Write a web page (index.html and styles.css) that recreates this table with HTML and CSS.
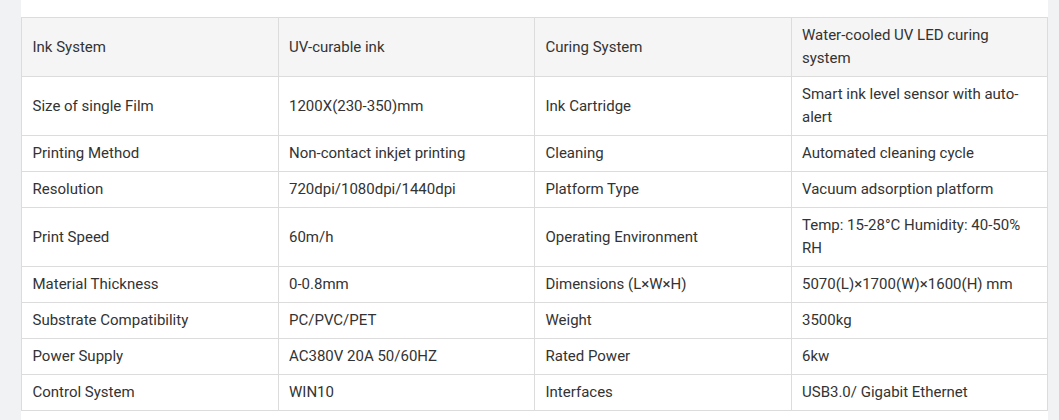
FILE: index.html
```html
<!DOCTYPE html>
<html>
<head>
<meta charset="utf-8">
<link rel="stylesheet" href="styles.css">
</head>
<body>
<div class="panel">
<table class="spec">
<tr class="head"><td>Ink System</td><td>UV-curable ink</td><td>Curing System</td><td>Water-cooled UV LED curing system</td></tr>
<tr><td>Size of single Film</td><td>1200X(230-350)mm</td><td>Ink Cartridge</td><td>Smart ink level sensor with auto-alert</td></tr>
<tr><td>Printing Method</td><td>Non-contact inkjet printing</td><td>Cleaning</td><td>Automated cleaning cycle</td></tr>
<tr><td>Resolution</td><td>720dpi/1080dpi/1440dpi</td><td>Platform Type</td><td>Vacuum adsorption platform</td></tr>
<tr><td>Print Speed</td><td>60m/h</td><td>Operating Environment</td><td>Temp: 15-28°C Humidity: 40-50% RH</td></tr>
<tr><td>Material Thickness</td><td>0-0.8mm</td><td>Dimensions (L×W×H)</td><td>5070(L)×1700(W)×1600(H) mm</td></tr>
<tr><td>Substrate Compatibility</td><td>PC/PVC/PET</td><td>Weight</td><td>3500kg</td></tr>
<tr><td>Power Supply</td><td>AC380V 20A 50/60HZ</td><td>Rated Power</td><td>6kw</td></tr>
<tr><td>Control System</td><td>WIN10</td><td>Interfaces</td><td>USB3.0/ Gigabit Ethernet</td></tr>
</table>
</div>
</body>
</html>
```
FILE: styles.css
```css
html, body {
  margin: 0;
  padding: 0;
  background: #f1f2f4;
}
body {
  font-family: Roboto, "Liberation Sans", sans-serif;
  font-size: 15px;
  color: #333;
}
.panel {
  margin: 0 11px 0 21px;
  background: #fff;
  padding: 17px 0 20px;
}
.spec {
  width: 100%;
  border-collapse: collapse;
  table-layout: fixed;
}
.spec td {
  border: 1px solid #dcdcdc;
  padding: 6px 10.5px;
  line-height: 23px;
  vertical-align: middle;
  text-align: left;
}
.spec tr.head td {
  background: #f5f5f5;
}
```
